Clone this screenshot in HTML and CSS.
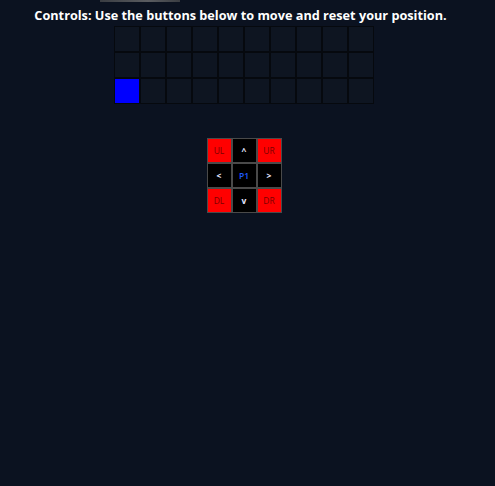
FILE: index.html
```html
<!DOCTYPE html>
<html>
<head>
<meta charset="utf-8">
<link rel="stylesheet" href="styles.css">
</head>
<body>
<div class="topbar"></div>
<h1 class="title">Controls: Use the buttons below to move and reset your position.</h1>
<div class="board">
  <div class="cell"></div><div class="cell"></div><div class="cell"></div><div class="cell"></div><div class="cell"></div><div class="cell"></div><div class="cell"></div><div class="cell"></div><div class="cell"></div><div class="cell"></div>
  <div class="cell"></div><div class="cell"></div><div class="cell"></div><div class="cell"></div><div class="cell"></div><div class="cell"></div><div class="cell"></div><div class="cell"></div><div class="cell"></div><div class="cell"></div>
  <div class="cell player"></div><div class="cell"></div><div class="cell"></div><div class="cell"></div><div class="cell"></div><div class="cell"></div><div class="cell"></div><div class="cell"></div><div class="cell"></div><div class="cell"></div>
</div>
<div class="pad">
  <button class="btn diag">UL</button>
  <button class="btn dir">^</button>
  <button class="btn diag">UR</button>
  <button class="btn dir">&lt;</button>
  <button class="btn center">P1</button>
  <button class="btn dir">&gt;</button>
  <button class="btn diag">DL</button>
  <button class="btn dir">v</button>
  <button class="btn diag">DR</button>
</div>
</body>
</html>
```
FILE: styles.css
```css
html, body {
  margin: 0;
  padding: 0;
  background: #0b1220;
  height: 100%;
}
body {
  position: relative;
  display: flex;
  flex-direction: column;
  align-items: center;
  font-family: "Open Sans", "Liberation Sans", sans-serif;
  padding-right: 7px;
  box-sizing: border-box;
}
.topbar {
  position: absolute;
  left: 100px;
  top: 0;
  width: 80px;
  height: 2px;
  background: linear-gradient(90deg, #3a3d42, #5a5c60 60%, #3a3d42);
}
.title {
  margin: 6px 0 0 0;
  font-size: 12.7px;
  line-height: 18px;
  font-weight: 700;
  color: #ffffff;
  padding-right: 7px;
}
.board {
  margin-top: 2px;
  display: grid;
  grid-template-columns: repeat(10, 26px);
  grid-template-rows: repeat(3, 26px);
}
.cell {
  box-sizing: border-box;
  border: 1px solid #06090e;
  background: #0e1521;
}
.cell.player {
  background: #0000ff;
}
.pad {
  margin-top: 34px;
  display: grid;
  grid-template-columns: repeat(3, 25px);
  grid-template-rows: repeat(3, 25px);
}
.btn {
  box-sizing: border-box;
  margin: 0;
  padding: 0;
  border: 1px solid #4a4a4a;
  font-family: "Open Sans", "Liberation Sans", sans-serif;
  font-size: 8.5px;
  display: flex;
  align-items: center;
  justify-content: center;
}
.diag {
  background: #ff0000;
  color: #7a0000;
}
.dir {
  background: #000000;
  color: #e8e8ff;
  font-weight: 700;
}
.center {
  background: #000000;
  color: #1f5bff;
  font-weight: 600;
}
```
